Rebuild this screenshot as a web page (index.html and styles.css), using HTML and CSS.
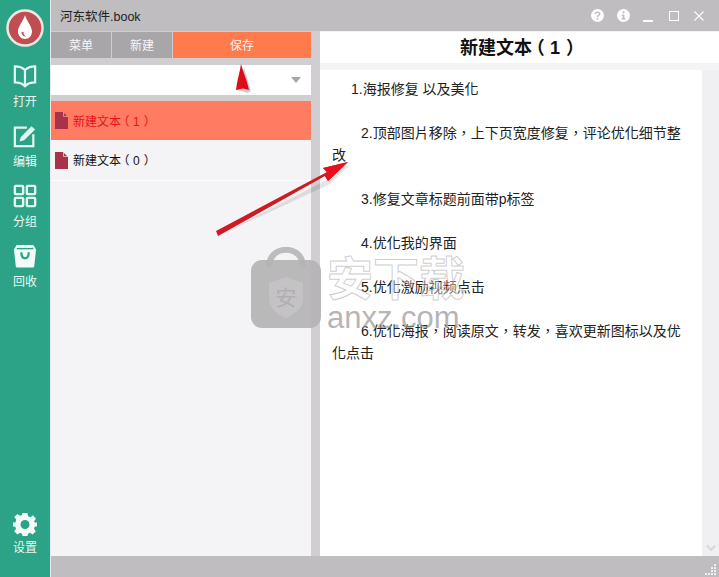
FILE: index.html
```html
<!DOCTYPE html>
<html lang="zh-CN">
<head>
    <meta charset="UTF-8">
    <meta name="viewport" content="width=device-width, initial-scale=1.0">
    <title>河东软件.book</title>
    <link rel="stylesheet" href="styles.css">
</head>
<body>
    <div class="app">
        <aside class="sidebar">
            <div class="logo">
                <svg width="40" height="40" viewBox="0 0 40 40">
                    <circle cx="20" cy="20" r="17.500" fill="#c04d50" stroke="#f0e6e2" stroke-width="2.500"/>
                    <path d="M20 7C21.500 13 27 18 27 23.500C27 27.500 24 31 20 31C16 31 13 27.500 13 23.500C13 18 18.500 13 20 7Z" fill="#fff"/>
                    <path d="M16.500 24C16.500 27 18.500 28.500 21 28.500C19 27.500 18.500 25.500 18.500 24Z" fill="#c04d50"/>
                </svg>
            </div>
            <a class="nav-item">
                <svg width="24" height="24" viewBox="0 0 26 26" fill="none" stroke="#e4f6f1" stroke-width="2.400">
                    <path d="M13 6.500C10 3.500 6 2.500 2 2.500V20C6 20 10 21 13 24C16 21 20 20 24 20V2.500C20 2.500 16 3.500 13 6.500V24"/>
                </svg>
                <span>打开</span>
            </a>
            <a class="nav-item">
                <svg width="24" height="24" viewBox="0 0 26 26" fill="none" stroke="#e4f6f1" stroke-width="2.400">
                    <path d="M15 4H2V24H22V11"/>
                    <path d="M7 19L8.500 14L20 2.500L24 6L12 17.500Z" fill="#e4f6f1" stroke="none"/>
                </svg>
                <span>编辑</span>
            </a>
            <a class="nav-item">
                <svg width="24" height="24" viewBox="0 0 26 26" fill="none" stroke="#e4f6f1" stroke-width="2.600">
                    <rect x="2" y="2" width="9" height="9" rx="1"/>
                    <rect x="15" y="2" width="9" height="9" rx="1"/>
                    <rect x="2" y="15" width="9" height="9" rx="1"/>
                    <rect x="15" y="15" width="9" height="9" rx="1"/>
                </svg>
                <span>分组</span>
            </a>
            <a class="nav-item">
                <svg width="24" height="24" viewBox="0 0 26 26">
                    <path d="M4 1H22L25 6L23 24C23 25 22 25.500 21 25.500H5C4 25.500 3 25 3 24L1 6Z" fill="#f2fbf8"/>
                    <path d="M4 5H22" stroke="#2ca386" stroke-width="1.500"/>
                    <path d="M9 9C9 14 11 15.500 13 15.500C15 15.500 17 14 17 9" fill="none" stroke="#2ca386" stroke-width="2.400"/>
                </svg>
                <span>回收</span>
            </a>
            <a class="nav-item settings">
                <svg width="24" height="24" viewBox="0 0 24 24">
                    <path fill="#f2fbf8" fill-rule="evenodd" d="M9.500 1H14.500L15 4.300L17.300 5.300L20 3.300L23 6.800L21 9.300L21.800 10.500H24V14.500H21.800L21 16.700L22.800 19.500L19.500 22.500L17 20.800L15 21.700L14.500 24H9.500L9 21.700L7 20.800L4.500 22.500L1.200 19.500L3 16.700L2.200 14.500H0V10.500H2.500L3.200 7.500L1.200 5L4.500 2L7 3.800L9 3ZM12 8A4.500 4.500 0 1 0 12 17A4.500 4.500 0 1 0 12 8Z"/>
                </svg>
                <span>设置</span>
            </a>
        </aside>

        <div class="main">
            <header class="titlebar">
                <span class="doc-name">河东软件.book</span>
                <div class="win-btns">
                    <svg width="13" height="13" viewBox="0 0 14 14">
                        <circle cx="7" cy="7" r="7" fill="#fff"/>
                        <path d="M4.800 5.500C4.800 2.800 9.300 2.800 9.300 5.300C9.300 7 7 6.800 7 8.500" fill="none" stroke="#bfbdbf" stroke-width="1.600"/>
                        <rect x="6.100" y="9.500" width="1.800" height="1.800" fill="#bfbdbf"/>
                    </svg>
                    <svg width="13" height="13" viewBox="0 0 14 14">
                        <circle cx="7" cy="7" r="7" fill="#fff"/>
                        <rect x="6" y="2.500" width="2" height="2" fill="#bfbdbf"/>
                        <path d="M5 6H8V10H9.200V11.200H4.800V10H6V7.200H5Z" fill="#bfbdbf"/>
                    </svg>
                    <svg width="10" height="14" viewBox="0 0 10 14"><rect x="0" y="11" width="10" height="2" fill="#fff"/></svg>
                    <svg class="win-max" width="10" height="10" viewBox="0 0 10 10"><rect x="0.500" y="0.500" width="9" height="9" fill="none" stroke="#fff"/></svg>
                    <svg class="win-close" width="10" height="10" viewBox="0 0 10 10"><path d="M0.500 0.500L9.500 9.500M9.500 0.500L0.500 9.500" stroke="#fff" stroke-width="1.100"/></svg>
                </div>
            </header>

            <div class="workspace">
                <section class="list-panel">
                    <div class="tabs">
                        <button class="tab tab-menu">菜单</button>
                        <button class="tab tab-new">新建</button>
                        <button class="tab tab-save">保存</button>
                    </div>
                    <div class="search">
                        <span class="caret"></span>
                    </div>
                    <ul class="doc-list">
                        <li class="doc active">
                            <svg class="doc-icon" width="13" height="17" viewBox="0 0 13 17">
                                <path d="M0 0H8L13 5V17H0Z" fill="#a8324a"/>
                                <path d="M8.500 0V4.500H13" fill="none" stroke="#e8a0a0" stroke-width="0.800"/>
                            </svg>
                            <span>新建文本<i class="open">（</i><i class="num">1</i>）</span>
                        </li>
                        <li class="doc">
                            <svg class="doc-icon" width="13" height="17" viewBox="0 0 13 17">
                                <path d="M0 0H8L13 5V17H0Z" fill="#a8324a"/>
                                <path d="M8.500 0V4.500H13" fill="none" stroke="#f0d0d8" stroke-width="0.800"/>
                            </svg>
                            <span>新建文本<i class="open">（</i><i class="num">0</i>）</span>
                        </li>
                    </ul>
                </section>

                <section class="editor">
                    <h1 class="editor-title">新建文本<i class="open">（</i><i class="num">1</i>）</h1>
                    <div class="editor-body">
                        <div class="text">
                            <p class="first">1.海报修复 以及美化</p>
                            <p>2.顶部图片移除，上下页宽度修复，评论优化细节整改</p>
                            <p>3.修复文章标题前面带p标签</p>
                            <p>4.优化我的界面</p>
                            <p>5.优化激励视频点击</p>
                            <p>6.优化海报，阅读原文，转发，喜欢更新图标以及优化点击</p>
                        </div>
                        <div class="scrollbar">
                            <svg width="12" height="8" viewBox="0 0 12 8"><path d="M2 1.500L6 6L10 1.500" fill="none" stroke="#d8d6da" stroke-width="2"/></svg>
                        </div>
                    </div>
                </section>
            </div>

            <footer class="statusbar">
                <svg width="13" height="13" viewBox="0 0 13 13" fill="#f0eff1">
                    <rect x="10" y="1" width="2" height="2"/>
                    <rect x="10" y="4" width="2" height="2"/><rect x="7" y="4" width="2" height="2"/>
                    <rect x="10" y="7" width="2" height="2"/><rect x="7" y="7" width="2" height="2"/>
                    <rect x="10" y="10" width="2" height="2"/><rect x="7" y="10" width="2" height="2"/><rect x="4" y="10" width="2" height="2"/><rect x="1" y="10" width="2" height="2"/>
                </svg>
            </footer>
        </div>
    </div>

    <!-- watermark stamped over the screenshot -->
    <div class="watermark">
        <svg class="wm-bag" width="70" height="81" viewBox="0 0 70 81">
            <path d="M18 20C18 -3 52 -3 52 20" fill="none" stroke="#bdbbbd" stroke-width="6"/>
            <rect x="0" y="13" width="70" height="68" rx="11" fill="#b4b2b4" fill-opacity="0.9"/>
            <path d="M35 30L52 36V52C52 62 42 68 35 71C28 68 18 62 18 52V36Z" fill="#c4c2c4"/>
            <text x="35" y="58" font-size="21" text-anchor="middle" fill="#b0aeb0">安</text>
        </svg>
        <div class="wm-text">
            <span class="wm-cn">安下载</span>
            <span class="wm-en">anxz.com</span>
        </div>
    </div>

    <!-- red annotation arrows -->
    <svg class="arrows" width="719" height="577" viewBox="0 0 719 577">
        <path d="M246 91L235 88L242 66L249 89Z" fill="#000" fill-opacity="0.2" transform="translate(2 2)"/>
        <path d="M241 64C243 72 247 80 249 90L243 88.500L236 90C237 80 240 72 241 64Z" fill="#dd0d17"/>
        <path d="M218 232L328 175L322 168L348 162L328 181" fill="#000" fill-opacity="0.1" transform="translate(2 3)"/>
        <path d="M216 231L327 172L323 168L348 162L328 181L325 176L218 236Z" fill="#d01a22"/>
        <path d="M327 172L323 168L348 162L328 181L325 176Z" fill="#ea0f1a"/>
    </svg>
</body>
</html>
```

FILE: styles.css
```css
html, body {
    height: 100%;
    margin: 0;
    overflow: hidden;
}
body {
    position: relative;
    font-family: "Liberation Sans", "Noto Sans CJK SC", sans-serif;
    font-size: 13px;
    color: #222;
}
.app {
    display: flex;
    height: 577px;
    width: 719px;
}

/* left green bar */
.sidebar {
    width: 50px;
    flex: none;
    background-color: #2ca386;
    display: flex;
    flex-direction: column;
    align-items: center;
    padding: 8px 0 21px;
    box-sizing: border-box;
}
.logo {
    height: 40px;
    margin-bottom: 16px;
}
.nav-item {
    display: flex;
    flex-direction: column;
    align-items: center;
    color: #eaf8f4;
    font-size: 12px;
    line-height: 16px;
    height: 60px;
}
.nav-item span {
    margin-top: 6px;
}
.settings {
    margin-top: auto;
    height: auto;
}
.settings span {
    margin-top: 4px;
}

.main {
    flex: 1;
    display: flex;
    flex-direction: column;
    min-width: 0;
    border-left: 1px solid #e8e7ea;
}
.titlebar {
    height: 31px;
    flex: none;
    background-color: #bfbdbf;
    display: flex;
    align-items: center;
    justify-content: space-between;
    padding: 0 15px 0 9px;
}
.doc-name {
    font-size: 12.5px;
    color: #222;
}
.win-btns {
    display: flex;
    align-items: center;
    gap: 13px;
}
.win-max {
    margin-left: 3px;
}
.win-close {
    margin-left: 2px;
}

.workspace {
    flex: 1;
    display: flex;
    min-height: 0;
    background-color: #d0ced0;
}

.list-panel {
    width: 260px;
    flex: none;
    display: flex;
    flex-direction: column;
}
.tabs {
    display: flex;
    height: 26px;
    flex: none;
    margin-top: 1px;
    gap: 1px;
}
.tab {
    border: none;
    padding: 0 0 2px;
    color: #f8f6f6;
    font-family: inherit;
    font-size: 12px;
    background-color: #a8a6a8;
}
.tab-menu {
    width: 60px;
}
.tab-new {
    width: 60px;
}
.tab-save {
    flex: 1;
    background-color: #ff7a4d;
}
.search {
    height: 30px;
    flex: none;
    margin: 7px 0 6px;
    background-color: #fff;
    display: flex;
    align-items: center;
    justify-content: flex-end;
    padding-right: 10px;
}
.caret {
    width: 0;
    height: 0;
    border-left: 5px solid transparent;
    border-right: 5px solid transparent;
    border-top: 6px solid #a8a6a8;
}
.doc-list {
    list-style: none;
    margin: 0;
    padding: 0;
    flex: 1;
    background-color: #f4f3f6;
}
.doc {
    height: 39px;
    display: flex;
    align-items: center;
    gap: 5px;
    padding-left: 4px;
    border-bottom: 1px solid #fff;
    font-family: "Liberation Sans", "Noto Sans CJK TC", sans-serif;
    font-size: 12px;
    color: #111;
}
.doc span {
    margin-bottom: 1px;
}
.doc:nth-child(2) {
    height: 40px;
}
.doc.active {
    background-color: #ff7c63;
    color: #e8101a;
    border-bottom: none;
}
.doc-icon {
    flex: none;
}

/* the fullwidth brackets sit in the middle of their cell in the original font */
.open {
    font-style: normal;
    margin: 0 0.3em 0 -0.3em;
}
.num {
    font-style: normal;
    margin-right: 0.33em;
}

.editor {
    flex: 1;
    margin-left: 9px;
    display: flex;
    flex-direction: column;
    min-width: 0;
    background-color: #f4f3f6;
}
.editor-title {
    margin: 1px 0 7px;
    height: 31px;
    flex: none;
    padding-left: 5px;
    background-color: #fff;
    font-family: "Liberation Sans", "Noto Sans CJK TC", sans-serif;
    font-size: 18px;
    font-weight: bold;
    line-height: 33px;
    text-align: center;
    color: #111;
}
.editor-body {
    flex: 1;
    display: flex;
    min-height: 0;
    background-color: #fff;
}
.text {
    flex: 1;
    padding: 8px 12px 0 12px;
    font-family: "Liberation Sans", "Noto Sans CJK TC", sans-serif;
    font-feature-settings: "locl" 0; /* keep the centred commas */
    font-size: 14px;
    line-height: 22px;
    color: #222;
}
.text p {
    margin: 0 0 22px;
    text-indent: 29px;
}
.text p.first {
    text-indent: 19px;
}
.scrollbar {
    width: 17px;
    flex: none;
    background-color: #f0eff1;
    display: flex;
    align-items: flex-end;
    justify-content: center;
    padding-bottom: 4px;
    box-sizing: border-box;
}

.statusbar {
    height: 21px;
    flex: none;
    background-color: #bfbdbf;
    display: flex;
    align-items: flex-end;
    justify-content: flex-end;
    padding: 0 2px 1px 0;
    box-sizing: border-box;
}

/* things lying over the window */
.watermark {
    position: absolute;
    left: 251px;
    top: 247px;
    display: flex;
    gap: 6px;
    pointer-events: none;
}
.wm-text {
    display: flex;
    flex-direction: column;
    margin-top: 8px;
}
.wm-cn {
    font-size: 46px;
    line-height: 49px;
    font-weight: bold;
    color: rgba(255, 255, 255, 0.35);
    -webkit-text-stroke: 1px rgba(175, 173, 175, 0.6);
}
.wm-en {
    font-size: 31px;
    line-height: 28px;
    color: rgba(150, 148, 150, 0.7);
}
.arrows {
    position: absolute;
    left: 0;
    top: 0;
    pointer-events: none;
}
```
